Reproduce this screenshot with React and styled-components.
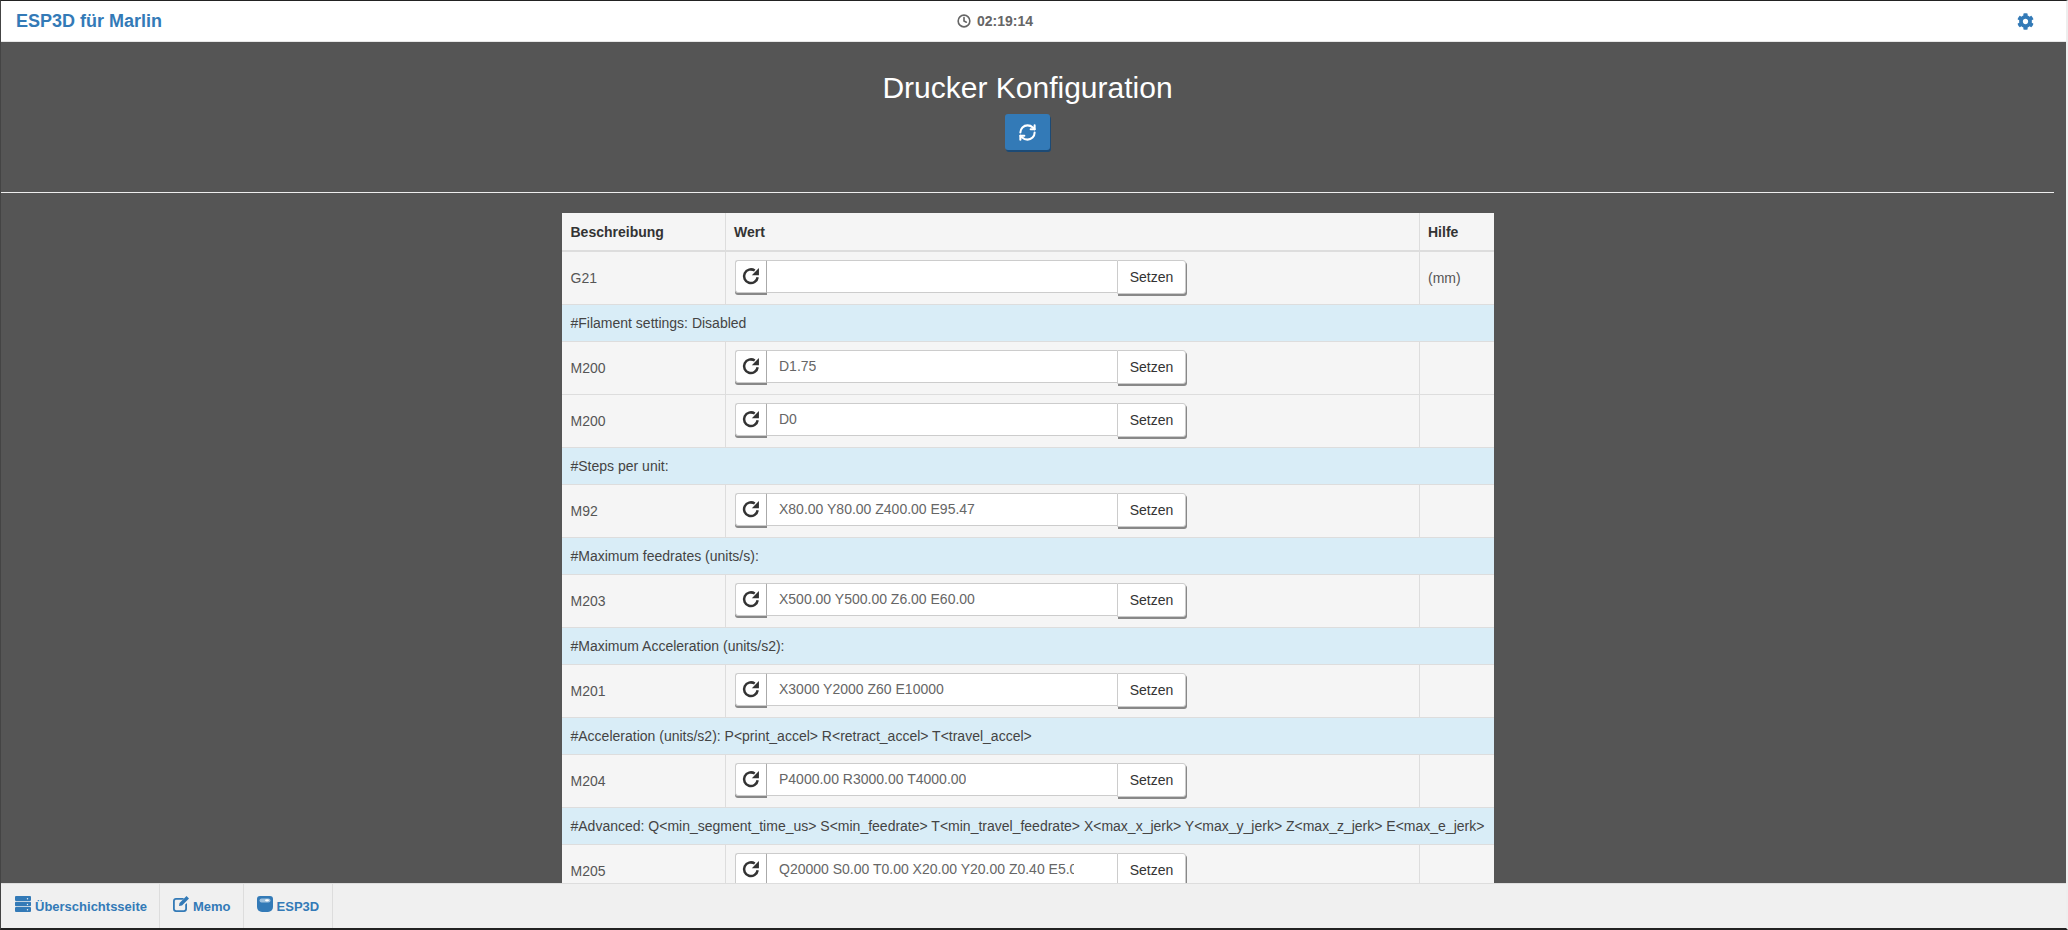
import React from "react";
import styled, { createGlobalStyle } from "styled-components";
import { RefreshCw } from "lucide-react";
import { FaCog } from "react-icons/fa";

const Global = createGlobalStyle`
  html, body { margin: 0; padding: 0; height: 100%; overflow: hidden; background: #222; }
  * { box-sizing: border-box; }
  #root { height: 100%; }
`;

const Page = styled.div`
  width: 2068px;
  height: 930px;
  overflow: hidden;
  font-family: "Liberation Sans", Arial, sans-serif;
  font-size: 14px;
  color: #333;
  background: #555;
  border-top: 1px solid #222;
  border-left: 1px solid #444;
  border-right: 2px solid #eee;
  border-bottom: 2px solid #222;
  display: flex;
  flex-direction: column;
`;

const TopBar = styled.header`
  flex: none;
  height: 41px;
  background: #fff;
  border-bottom: 1px solid #e7e7e7;
  display: grid;
  grid-template-columns: 941px auto 1fr;
  align-items: center;
  padding: 0 15px;
`;

const Brand = styled.div`
  font-size: 18px;
  font-weight: 700;
  color: #337ab7;
`;

const Clock = styled.div`
  display: flex;
  align-items: center;
  gap: 6px;
  font-size: 14px;
  font-weight: 700;
  color: #666;
`;

const Gear = styled.div`
  justify-self: end;
  display: flex;
  margin-right: 17px;
  color: #337ab7;
`;

const Content = styled.main`
  flex: 1;
  min-height: 0;
  overflow: hidden;
  padding-right: 12px;
`;

const Title = styled.h1`
  margin: 29px 0 0;
  text-align: center;
  font-size: 30px;
  line-height: 33px;
  font-weight: 400;
  color: #fff;
`;

const RefreshRow = styled.div`
  display: flex;
  justify-content: center;
  margin-top: 10px;
`;

const BlueButton = styled.button`
  width: 45px;
  height: 36px;
  padding: 0;
  display: flex;
  align-items: center;
  justify-content: center;
  background: #337ab7;
  color: #fff;
  border: 0;
  border-radius: 3px;
  box-shadow: 1px 2px 0 #1c4a75;
`;

const Rule = styled.hr`
  margin: 42px 0 0;
  border: 0;
  border-top: 1px solid #eee;
`;

const Table = styled.table`
  width: 932px;
  margin: 20px auto 0;
  table-layout: fixed;
  border-collapse: collapse;
  background: #f5f5f5;
  font-size: 14px;
`;

const Th = styled.th`
  text-align: left;
  height: 38px;
  padding: 0 8px;
  font-size: 14px;
  font-weight: 700;
  color: #333;
  border-bottom: 2px solid #ddd;
  border-left: 1px solid #ddd;
  &:first-child { border-left: 0; padding-left: 9px; }
`;

const Td = styled.td`
  height: 53px;
  padding: 0 8px;
  border-top: 1px solid #ddd;
  border-left: 1px solid #ddd;
  color: #555;
  &:first-child { border-left: 0; padding-left: 9px; }
`;

const Section = styled.td`
  height: 37px;
  padding: 0 9px;
  background: #d9edf7;
  border-top: 1px solid #ddd;
  color: #444;
  white-space: nowrap;
`;

const Control = styled.div`
  display: flex;
  align-items: flex-start;
  height: 36px;
  margin-left: 1px;
`;

const ReloadBtn = styled.div`
  flex: none;
  width: 32px;
  height: 33px;
  display: flex;
  align-items: center;
  justify-content: center;
  padding-bottom: 1px;
  background: #fff;
  color: #333;
  border: 1px solid #ccc;
  border-right: 1px solid #aaa;
  border-radius: 3px 0 0 3px;
  box-shadow: 0 2px 0 #888;
`;

const Field = styled.div`
  flex: none;
  width: 350px;
  height: 33px;
  padding: 0 43px 0 12px;
  display: flex;
  align-items: center;
  background: #fff;
  color: #666;
  border-top: 1px solid #ccc;
  border-bottom: 1px solid #ccc;
  white-space: nowrap;
`;

const FieldText = styled.span`
  display: block;
  overflow: hidden;
`;

const SetBtn = styled.div`
  flex: none;
  width: 69px;
  height: 34px;
  display: flex;
  align-items: center;
  justify-content: center;
  background: #fff;
  color: #333;
  border: 1px solid #ccc;
  border-radius: 0 3px 3px 0;
  box-shadow: 1px 2px 0 #888;
`;

const Footer = styled.footer`
  flex: none;
  height: 45px;
  background: #f0f0f0;
  border-top: 1px solid #ddd;
  display: flex;
`;

const Tab = styled.div`
  display: flex;
  align-items: center;
  gap: 4px;
  padding: 0 ${(p) => p.$pr}px 0 ${(p) => p.$pl}px;
  font-size: 13px;
  font-weight: 700;
  color: #337ab7;
  border-right: 1px solid #ddd;
`;

const TabIcon = styled.svg`
  width: 16px;
  height: 16px;
  fill: #337ab7;
  margin-top: -5px;
`;

const Reload = () => (
  <svg width="20" height="20" viewBox="0 0 24 24" fill="none">
    <path d="M20 13.500A8.200 8.200 0 1 1 16.500 5.500" stroke="currentColor" strokeWidth="3" />
    <path d="M21.500 2.500v8.500h-8.500z" fill="currentColor" />
  </svg>
);

const rows = [
  { t: "r", d: "G21", v: "", h: "(mm)" },
  { t: "s", d: "#Filament settings: Disabled" },
  { t: "r", d: "M200", v: "D1.75" },
  { t: "r", d: "M200", v: "D0" },
  { t: "s", d: "#Steps per unit:" },
  { t: "r", d: "M92", v: "X80.00 Y80.00 Z400.00 E95.47" },
  { t: "s", d: "#Maximum feedrates (units/s):" },
  { t: "r", d: "M203", v: "X500.00 Y500.00 Z6.00 E60.00" },
  { t: "s", d: "#Maximum Acceleration (units/s2):" },
  { t: "r", d: "M201", v: "X3000 Y2000 Z60 E10000" },
  { t: "s", d: "#Acceleration (units/s2): P<print_accel> R<retract_accel> T<travel_accel>" },
  { t: "r", d: "M204", v: "P4000.00 R3000.00 T4000.00" },
  { t: "s", d: "#Advanced: Q<min_segment_time_us> S<min_feedrate> T<min_travel_feedrate> X<max_x_jerk> Y<max_y_jerk> Z<max_z_jerk> E<max_e_jerk>" },
  { t: "r", d: "M205", v: "Q20000 S0.00 T0.00 X20.00 Y20.00 Z0.40 E5.00" },
];

export default function App() {
  return (
    <Page>
      <Global />
      <TopBar>
        <Brand>ESP3D für Marlin</Brand>
        <Clock>
          <svg width="14" height="14" viewBox="0 0 24 24" fill="none" stroke="#666" strokeWidth="2.8" strokeLinecap="round">
            <circle cx="12" cy="12" r="10" />
            <path d="M12 6v6l4 2" />
          </svg>
          02:19:14
        </Clock>
        <Gear><FaCog size={17} /></Gear>
      </TopBar>
      <Content>
        <Title>Drucker Konfiguration</Title>
        <RefreshRow>
          <BlueButton><RefreshCw size={19} strokeWidth={2.6} /></BlueButton>
        </RefreshRow>
        <Rule />
        <Table>
          <colgroup>
            <col style={{ width: 164 }} />
            <col style={{ width: 694 }} />
            <col style={{ width: 74 }} />
          </colgroup>
          <thead>
            <tr>
              <Th>Beschreibung</Th>
              <Th>Wert</Th>
              <Th>Hilfe</Th>
            </tr>
          </thead>
          <tbody>
            {rows.map((r, i) =>
              r.t === "s" ? (
                <tr key={i}><Section colSpan={3}>{r.d}</Section></tr>
              ) : (
                <tr key={i}>
                  <Td>{r.d}</Td>
                  <Td>
                    <Control>
                      <ReloadBtn><Reload /></ReloadBtn>
                      <Field><FieldText>{r.v}</FieldText></Field>
                      <SetBtn>Setzen</SetBtn>
                    </Control>
                  </Td>
                  <Td>{r.h}</Td>
                </tr>
              )
            )}
          </tbody>
        </Table>
      </Content>
      <Footer>
        <Tab $pl={14} $pr={12}>
          <TabIcon viewBox="0 0 16 16">
            <path fillRule="evenodd" d="M1 0h14a1 1 0 0 1 1 1v3a1 1 0 0 1-1 1H1a1 1 0 0 1-1-1V1a1 1 0 0 1 1-1Zm11.500 2a.7.7 0 1 0 0 1.400.7.7 0 0 0 0-1.400ZM1 5.800h14a1 1 0 0 1 1 1v2.400a1 1 0 0 1-1 1H1a1 1 0 0 1-1-1V6.800a1 1 0 0 1 1-1Zm11.500 2a.7.7 0 1 0 0 1.400.7.7 0 0 0 0-1.400ZM1 11h14a1 1 0 0 1 1 1v3a1 1 0 0 1-1 1H1a1 1 0 0 1-1-1v-3a1 1 0 0 1 1-1Zm11.500 2a.7.7 0 1 0 0 1.400.7.7 0 0 0 0-1.400Z" />
          </TabIcon>
          Überschichtsseite
        </Tab>
        <Tab $pl={13} $pr={12}>
          <TabIcon viewBox="0 0 16 16">
            <path d="M3 2h8L9.500 3.800H3.200c-.8 0-1.400.6-1.400 1.400v7.600c0 .8.600 1.400 1.400 1.400h7.600c.8 0 1.400-.6 1.400-1.400V8.500L14 7v6c0 1.700-1.300 3-3 3H3c-1.700 0-3-1.300-3-3V5c0-1.700 1.300-3 3-3Zm10.500-2L16 2.500 9 9.500l-3 .5.500-3L13.500 0Z" />
          </TabIcon>
          Memo
        </Tab>
        <Tab $pl={13} $pr={13}>
          <TabIcon viewBox="0 0 16 16">
            <path d="M3 0h10a3 3 0 0 1 3 3v8a5 5 0 0 1-5 5H5a5 5 0 0 1-5-5V3a3 3 0 0 1 3-3Z" />
            <rect x="2.500" y="2.500" width="11" height="4" rx="2" fill="#9fc1de" />
            <ellipse cx="10" cy="4.300" rx="2" ry="1.100" fill="#fff" />
          </TabIcon>
          ESP3D
        </Tab>
      </Footer>
    </Page>
  );
}
